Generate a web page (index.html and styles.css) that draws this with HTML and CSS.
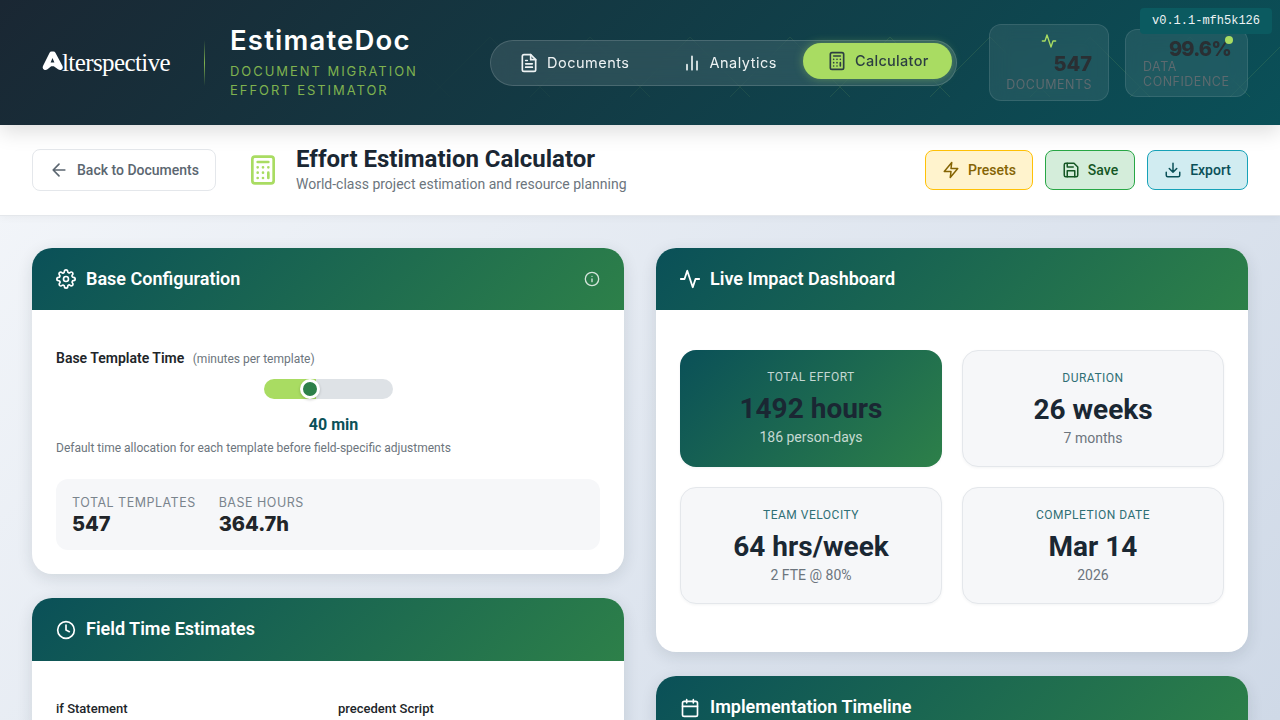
FILE: index.html
```html
<!DOCTYPE html>
<html lang="en">
<head>
    <meta charset="UTF-8">
    <title>EstimateDoc - Effort Estimation Calculator</title>
    <link rel="stylesheet" href="styles.css">
</head>
<body>
<div class="page">
    <header class="app-header">
        <svg class="hatch" width="100%" height="125" aria-hidden="true">
            <defs>
                <pattern id="hatchTile" x="90" y="37" width="100" height="100" patternUnits="userSpaceOnUse">
                    <path d="M0 0L60 60M40 60L100 0" stroke="#a9dc62" stroke-width="1" fill="none"/>
                </pattern>
                <linearGradient id="hatchFade">
                    <stop offset="0.3" stop-color="#fff" stop-opacity="0"/>
                    <stop offset="0.7" stop-color="#fff" stop-opacity="1"/>
                </linearGradient>
                <mask id="hatchMask"><rect width="100%" height="125" fill="url(#hatchFade)"/></mask>
            </defs>
            <rect width="100%" height="125" fill="url(#hatchTile)" mask="url(#hatchMask)" opacity="0.12"/>
        </svg>
        <div class="version">v0.1.1-mfh5k126</div>
        <div class="brand">
            <div class="logo">
                <svg width="21" height="20" viewBox="0 0 21 19"><path fill="#fff" fill-rule="evenodd" d="M7.6 1.2Q8.2 0 9.5 0h2q1.3 0 1.9 1.2l7 13q1.2 2.800-1 4-1.800.6-3.400-.4L11.800 14.800h-2.600L5.500 17.800q-1.600 1-3.400.4-2.200-1.200-1-4zM10.500 6.500 8.600 11h3.800z"/></svg>
                <span>lterspective</span>
            </div>
            <div class="brand-divider"></div>
            <div>
                <h1 class="brand-title">EstimateDoc</h1>
                <div class="brand-sub">Document Migration<br>Effort Estimator</div>
            </div>
        </div>
        <nav class="main-nav">
            <a class="nav-item nav-docs">
                <svg class="ico" width="20" height="20" viewBox="0 0 24 24"><path d="M14 2H6a2 2 0 0 0-2 2v16a2 2 0 0 0 2 2h12a2 2 0 0 0 2-2V8z"/><path d="M14 2v6h6M16 13H8M16 17H8M10 9H8"/></svg>
                Documents
            </a>
            <a class="nav-item nav-analytics">
                <svg class="ico" width="20" height="20" viewBox="0 0 24 24"><path d="M18 20V10M12 20V4M6 20v-6"/></svg>
                Analytics
            </a>
            <a class="nav-item active">
                <svg class="ico" width="20" height="20" viewBox="0 0 24 24"><rect x="4" y="2" width="16" height="20" rx="2"/><path d="M8 6h8M16 14v4M16 10h.01M12 10h.01M8 10h.01M12 14h.01M8 14h.01M12 18h.01M8 18h.01"/></svg>
                Calculator
            </a>
        </nav>
        <div class="header-stats">
            <div class="hstat hstat-docs">
                <svg class="ico hstat-icon" width="16" height="16" viewBox="0 0 24 24"><path d="M22 12h-4l-3 9L9 3l-3 9H2"/></svg>
                <div class="hstat-value">547</div>
                <div class="hstat-label">Documents</div>
            </div>
            <div class="hstat hstat-conf">
                <span class="live-dot"></span>
                <div class="hstat-value">99.6%</div>
                <div class="hstat-label">Data<br>Confidence</div>
            </div>
        </div>
    </header>

    <section class="toolbar">
        <button class="back-btn">
            <svg class="ico" width="20" height="20" viewBox="0 0 24 24"><path d="M19 12H5M12 19l-7-7 7-7"/></svg>
            Back to Documents
        </button>
        <svg class="ico page-icon" width="32" height="32" viewBox="0 0 24 24"><rect x="4" y="2" width="16" height="20" rx="2"/><path d="M8 6h8M16 14v4M16 10h.01M12 10h.01M8 10h.01M12 14h.01M8 14h.01M12 18h.01M8 18h.01"/></svg>
        <div class="page-heading">
            <h2>Effort Estimation Calculator</h2>
            <p>World-class project estimation and resource planning</p>
        </div>
        <div class="actions">
            <button class="act act-presets">
                <svg class="ico" width="18" height="18" viewBox="0 0 24 24"><path d="M13 2 3 14h9l-1 8 10-12h-9z"/></svg>
                Presets
            </button>
            <button class="act act-save">
                <svg class="ico" width="18" height="18" viewBox="0 0 24 24"><path d="M19 21H5a2 2 0 0 1-2-2V5a2 2 0 0 1 2-2h11l5 5v11a2 2 0 0 1-2 2z"/><path d="M17 21v-8H7v8M7 3v5h8"/></svg>
                Save
            </button>
            <button class="act act-export">
                <svg class="ico" width="18" height="18" viewBox="0 0 24 24"><path d="M21 15v4a2 2 0 0 1-2 2H5a2 2 0 0 1-2-2v-4M7 10l5 5 5-5M12 15V3"/></svg>
                Export
            </button>
        </div>
    </section>

    <main class="content">
        <div class="column">
            <section class="card">
                <div class="card-head">
                    <svg class="ico" width="20" height="20" viewBox="0 0 24 24"><circle cx="12" cy="12" r="3"/><path d="M19.400 15a1.650 1.650 0 0 0 .33 1.820l.06.06a2 2 0 1 1-2.830 2.830l-.06-.06a1.650 1.650 0 0 0-2.800 1.170V21a2 2 0 1 1-4 0v-.09a1.650 1.650 0 0 0-2.800-1.170l-.06.06a2 2 0 1 1-2.830-2.830l.06-.06a1.650 1.650 0 0 0-1.170-2.800H3a2 2 0 1 1 0-4h.09a1.650 1.650 0 0 0 1.170-2.800l-.06-.06a2 2 0 1 1 2.830-2.830l.06.06a1.650 1.650 0 0 0 1.820.33H9a1.650 1.650 0 0 0 1-1.510V3a2 2 0 1 1 4 0v.09a1.650 1.650 0 0 0 2.800 1.170l.06-.06a2 2 0 1 1 2.830 2.830l-.06.06a1.650 1.650 0 0 0-.33 1.820V9a1.650 1.650 0 0 0 1.510 1H21a2 2 0 1 1 0 4h-.09a1.650 1.650 0 0 0-1.510 1z"/></svg>
                    <h3>Base Configuration</h3>
                    <svg class="ico card-info" width="16" height="16" viewBox="0 0 24 24"><circle cx="12" cy="12" r="10"/><path d="M12 16v-4M12 8h.01"/></svg>
                </div>
                <div class="card-body config-body">
                    <div class="field-label">Base Template Time <small>(minutes per template)</small></div>
                    <div class="slider-wrap">
                        <input class="slider" type="range" min="20" max="80" value="40">
                        <div class="slider-value">40 min</div>
                    </div>
                    <p class="help">Default time allocation for each template before field-specific adjustments</p>
                    <div class="totals">
                        <div>
                            <div class="total-label">Total Templates</div>
                            <div class="total-value">547</div>
                        </div>
                        <div>
                            <div class="total-label">Base Hours</div>
                            <div class="total-value">364.7h</div>
                        </div>
                    </div>
                </div>
            </section>

            <section class="card">
                <div class="card-head tall">
                    <svg class="ico" width="20" height="20" viewBox="0 0 24 24"><circle cx="12" cy="12" r="10"/><path d="M12 6v6l4 2"/></svg>
                    <h3>Field Time Estimates</h3>
                </div>
                <div class="card-body fields-body">
                    <div class="field-name">if Statement</div>
                    <div class="field-name">precedent Script</div>
                </div>
            </section>
        </div>

        <div class="column">
            <section class="card">
                <div class="card-head">
                    <svg class="ico ico-lg" width="22" height="22" viewBox="0 0 24 24"><path d="M22 12h-4l-3 9L9 3l-3 9H2"/></svg>
                    <h3>Live Impact Dashboard</h3>
                </div>
                <div class="card-body metrics">
                    <div class="metric metric-main">
                        <div class="metric-label">Total Effort</div>
                        <div class="metric-value">1492 hours</div>
                        <div class="metric-sub">186 person-days</div>
                    </div>
                    <div class="metric">
                        <div class="metric-label">Duration</div>
                        <div class="metric-value">26 weeks</div>
                        <div class="metric-sub">7 months</div>
                    </div>
                    <div class="metric">
                        <div class="metric-label">Team Velocity</div>
                        <div class="metric-value">64 hrs/week</div>
                        <div class="metric-sub">2 FTE @ 80%</div>
                    </div>
                    <div class="metric">
                        <div class="metric-label">Completion Date</div>
                        <div class="metric-value">Mar 14</div>
                        <div class="metric-sub">2026</div>
                    </div>
                </div>
            </section>

            <section class="card">
                <div class="card-head tall">
                    <svg class="ico" width="20" height="20" viewBox="0 0 24 24"><rect x="3" y="4" width="18" height="18" rx="2"/><path d="M16 2v4M8 2v4M3 10h18"/></svg>
                    <h3>Implementation Timeline</h3>
                </div>
            </section>
        </div>
    </main>
</div>
</body>
</html>
```

FILE: styles.css
```css
* { box-sizing: border-box; }
html, body { margin: 0; height: 100%; overflow: hidden; }
body { font-family: Roboto, "Liberation Sans", sans-serif; color: #1a2733; }
h1, h2, h3, p { margin: 0; }
.page {
    height: 720px;
    overflow: hidden;
    background: linear-gradient(135deg, #f6f8fb 0%, #cfd9e7 100%);
}
.ico {
    fill: none;
    stroke: currentColor;
    stroke-width: 2;
    stroke-linecap: round;
    stroke-linejoin: round;
    flex: none;
}
.ico-lg { margin: 0 -1px; }

/* header */
.app-header {
    position: relative;
    z-index: 2;
    height: 125px;
    display: flex;
    align-items: center;
    padding: 0 32px 0 42px;
    background: linear-gradient(135deg, #1a2733 0%, #0a5058 100%);
    box-shadow: 0 6px 20px rgba(0,0,0,0.14);
    font-family: Inter, "Noto Sans", sans-serif;
}
.hatch { position: absolute; left: 0; top: 0; pointer-events: none; }
.version {
    position: absolute;
    top: 8px;
    right: 8px;
    z-index: 3;
    height: 26px;
    width: 132px;
    text-align: center;
    border-radius: 4px;
    background: #0b5a60;
    color: #eef3f4;
    font: 12px/26px "Liberation Mono", monospace;
}
.brand { position: relative; display: flex; align-items: center; width: 448px; flex: none; }
.logo { display: flex; align-items: center; width: 162px; color: #fff; }
.logo svg { margin-top: -3px; flex: none; }
.logo span {
    font: 25px/1 "Liberation Serif", serif;
    letter-spacing: -0.6px;
    margin-left: -1px;
}
.brand-divider {
    width: 1px;
    height: 46px;
    margin-right: 25px;
    background: linear-gradient(180deg, transparent, #7fb24f 50%, transparent);
}
.brand-title { font-size: 27.5px; font-weight: 600; line-height: 34px; margin-top: -2px; color: #fff; letter-spacing: 1.2px; }
.brand-sub {
    margin-top: 5px;
    font-size: 13px;
    line-height: 19px;
    letter-spacing: 1.95px;
    text-transform: uppercase;
    color: #7fb24f;
}
.main-nav {
    position: relative;
    width: 467px;
    height: 46px;
    flex: none;
    display: flex;
    align-items: center;
    border: 1px solid rgba(255,255,255,0.15);
    border-radius: 23px;
    background: rgba(255,255,255,0.1);
    backdrop-filter: blur(10px);
}
.nav-item {
    display: flex;
    align-items: center;
    gap: 8px;
    font-size: 14.500px;
    font-weight: 400;
    color: #eef3f4;
    letter-spacing: 0.5px;
    white-space: nowrap;
}
.nav-docs { margin-left: 28px; }
.nav-analytics { margin-left: 52px; }
.nav-item.active {
    margin: -4px 4px 0 auto;
    width: 149px;
    height: 36px;
    padding-left: 24px;
    border-radius: 18px;
    background: #a9dc62;
    color: #2c3e42;
    font-weight: 500;
    letter-spacing: 0.3px;
    box-shadow: 0 0 10px rgba(169,220,98,0.4);
}
.header-stats { position: relative; display: flex; align-items: center; gap: 16px; margin-left: 32px; }
.hstat {
    position: relative;
    border: 1px solid rgba(255,255,255,0.1);
    border-radius: 12px;
    background: rgba(255,255,255,0.08);
    backdrop-filter: blur(10px);
    color: #2a2f33;
}
.hstat-docs { width: 120px; height: 77px; padding: 8px 16px 0; text-align: right; }
.hstat-conf { width: 123px; height: 68px; padding: 6px 16px 0 17px; }
.hstat-icon { display: block; margin: 0 auto 2px; color: #a9dc62; }
.hstat-value { font-size: 20px; font-weight: 800; line-height: 26px; text-align: right; color: #2a2f33; }
.hstat-conf .hstat-value { letter-spacing: -0.8px; margin-bottom: -3px; }
.hstat-label {
    font-size: 12.500px;
    line-height: 15px;
    letter-spacing: 0.5px;
    text-transform: uppercase;
    color: #5d6a6f;
    white-space: nowrap;
}
.live-dot {
    position: absolute;
    top: 6px;
    right: 14px;
    width: 8px;
    height: 8px;
    border-radius: 50%;
    background: #a9dc62;
}

/* toolbar */
.toolbar {
    position: relative;
    z-index: 1;
    height: 91px;
    display: flex;
    align-items: center;
    padding: 0 32px;
    background: #fff;
    border-bottom: 1px solid #e4e7eb;
    box-shadow: 0 2px 8px rgba(0,0,0,0.04);
}
.back-btn {
    display: flex;
    align-items: center;
    gap: 8px;
    width: 184px;
    height: 42px;
    padding: 0 16px;
    border: 1px solid #e4e7eb;
    border-radius: 8px;
    background: #fff;
    color: #5b6670;
    font: 500 14px Roboto, sans-serif;
    white-space: nowrap;
}
.page-icon { margin: 0 17px 0 31px; color: #a9dc62; }
.page-heading h2 { font-size: 24px; font-weight: 700; line-height: 28px; margin-top: -2px; }
.page-heading p { font-size: 14px; line-height: 18px; margin-top: 2px; color: #6c757d; }
.actions { margin-left: auto; display: flex; gap: 12px; }
.act {
    display: flex;
    align-items: center;
    justify-content: center;
    gap: 8px;
    height: 40px;
    border-radius: 8px;
    border: 1px solid;
    font: 500 14px Roboto, sans-serif;
}
.act-presets { width: 108px; background: #fff3cd; border-color: #ffc107; color: #856404; }
.act-save { width: 90px; background: #d4edda; border-color: #28a745; color: #155724; }
.act-export { width: 101px; background: #d1ecf1; border-color: #17a2b8; color: #0a5058; }

/* content */
.content {
    display: grid;
    grid-template-columns: 1fr 1fr;
    gap: 32px;
    padding: 32px 32px 0;
    align-items: start;
}
.column { display: flex; flex-direction: column; gap: 24px; }
.card {
    border-radius: 20px;
    background: #fff;
    box-shadow: 0 4px 16px rgba(26,39,51,0.12);
    overflow: hidden;
}
.card-head {
    height: 62px;
    display: flex;
    align-items: center;
    gap: 10px;
    padding: 0 24px;
    color: #fff;
    background: linear-gradient(135deg, #0a5058 0%, #2d8049 100%);
}
.card-head.tall { height: 63px; }
.card-head h3 { font-size: 18px; font-weight: 600; margin-top: -2px; }
.card-info { margin-left: auto; opacity: 0.8; }
.card-body { padding: 40px 24px 24px; }
.config-body { height: 264px; }
.field-label { font-size: 14px; font-weight: 600; line-height: 16px; color: #212529; }
.field-label small { font-size: 12px; font-weight: 400; color: #6c757d; margin-left: 5px; }
.slider-wrap { text-align: center; margin-top: 12px; }
.slider {
    -webkit-appearance: none;
    appearance: none;
    display: block;
    width: 129px;
    height: 20px;
    margin: 0 auto;
    border-radius: 10px;
    background: linear-gradient(90deg, #a9dc62 40%, #dee2e6 40%);
}
.slider::-webkit-slider-thumb {
    -webkit-appearance: none;
    width: 20px;
    height: 20px;
    border-radius: 50%;
    background: #2d8049;
    border: 3px solid #fff;
    box-shadow: 0 1px 3px rgba(0,0,0,0.2);
}
.slider-value { margin-top: 16px; padding-left: 11px; font-size: 16px; font-weight: 700; line-height: 20px; color: #0a5058; }
.help { margin-top: 5px; font-size: 12px; line-height: 16px; color: #6c757d; }
.totals {
    display: flex;
    gap: 23px;
    height: 71px;
    margin-top: 23px;
    padding: 16px;
    border-radius: 12px;
    background: #f6f7f9;
    font-family: Inter, sans-serif;
}
.total-label { font-size: 12.500px; line-height: 16px; letter-spacing: 0.5px; text-transform: uppercase; color: #7a848d; }
.total-value { font-size: 20px; font-weight: 800; line-height: 26px; color: #212529; }
.fields-body { display: grid; grid-template-columns: 1fr 1fr; gap: 20px; }
.field-name { font-size: 13px; font-weight: 500; color: #212529; }
.metrics {
    display: grid;
    grid-template-columns: 1fr 1fr;
    gap: 20px;
    padding-bottom: 48px;
}
.metric {
    height: 117px;
    padding-top: 20px;
    text-align: center;
    border: 1px solid #e4e7eb;
    border-radius: 16px;
    background: #f6f7f9;
    box-shadow: 0 1px 3px rgba(26,39,51,0.05);
}
.metric-label { font-size: 12px; line-height: 14px; letter-spacing: 0.5px; text-transform: uppercase; color: #2f6f75; }
.metric-value { font-size: 28px; font-weight: 700; line-height: 34px; margin-top: 8px; color: #1a2733; }
.metric-sub { font-size: 14px; line-height: 18px; margin-top: 2px; color: #6c757d; }
.metric-main {
    border: none;
    background: linear-gradient(135deg, #0a5058 0%, #2d8049 100%);
}
.metric-main .metric-label, .metric-main .metric-sub { color: rgba(255,255,255,0.75); }
```
